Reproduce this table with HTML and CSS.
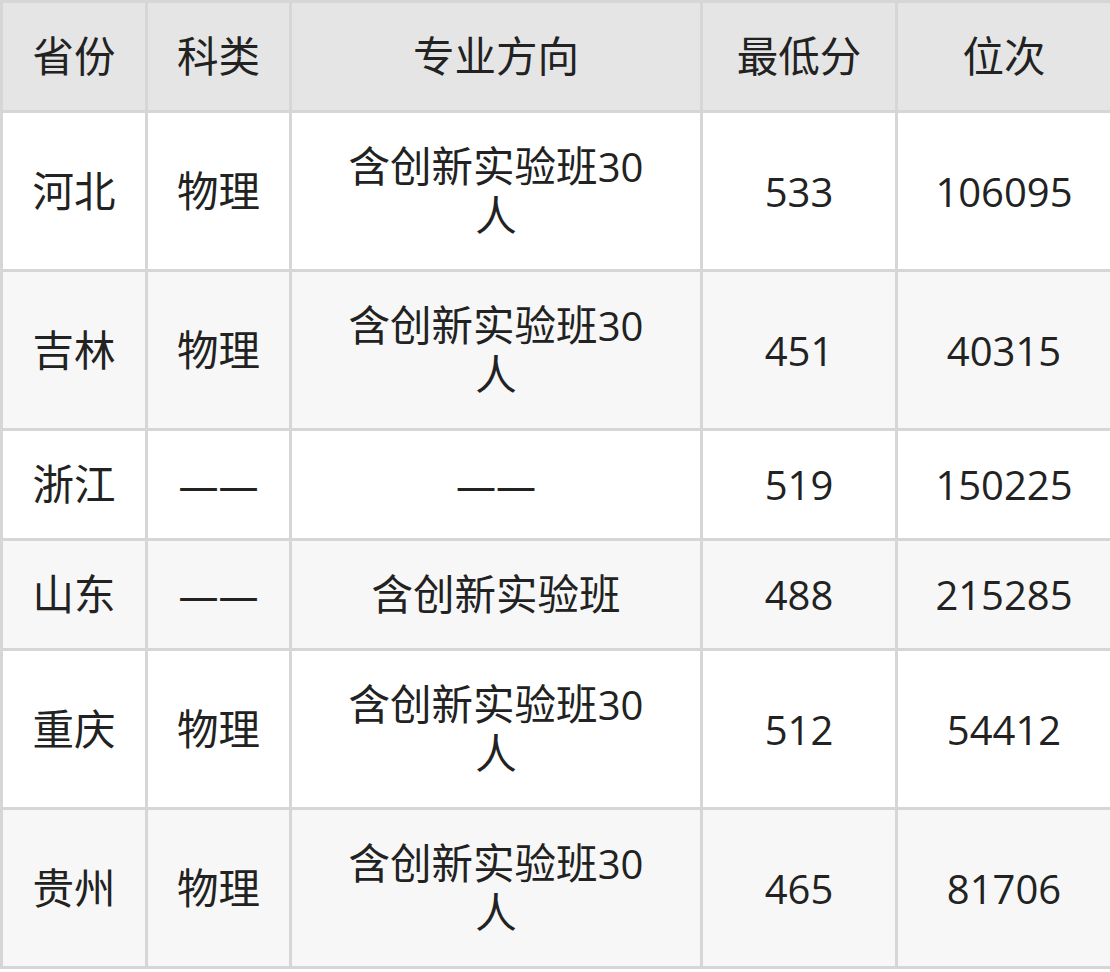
FILE: index.html
```html
<!DOCTYPE html>
<html lang="zh-CN">
<head>
<meta charset="utf-8">
<title>分数线</title>
<link rel="stylesheet" href="styles.css">
</head>
<body>
<table class="score-table">
  <colgroup>
    <col class="c-prov">
    <col class="c-type">
    <col class="c-major">
    <col class="c-min">
    <col class="c-rank">
  </colgroup>
  <thead>
    <tr><th><span class="zh">省份</span></th><th><span class="zh">科类</span></th><th><span class="zh">专业方向</span></th><th><span class="zh">最低分</span></th><th><span class="zh">位次</span></th></tr>
  </thead>
  <tbody>
    <tr><td><span class="zh">河北</span></td><td><span class="zh">物理</span></td><td class="major"><span class="zh">含创新实验班</span>30<span class="zh">人</span></td><td>533</td><td>106095</td></tr>
    <tr><td><span class="zh">吉林</span></td><td><span class="zh">物理</span></td><td class="major"><span class="zh">含创新实验班</span>30<span class="zh">人</span></td><td>451</td><td>40315</td></tr>
    <tr><td><span class="zh">浙江</span></td><td>——</td><td class="major">——</td><td>519</td><td>150225</td></tr>
    <tr><td><span class="zh">山东</span></td><td>——</td><td class="major"><span class="zh">含创新实验班</span></td><td>488</td><td>215285</td></tr>
    <tr><td><span class="zh">重庆</span></td><td><span class="zh">物理</span></td><td class="major"><span class="zh">含创新实验班</span>30<span class="zh">人</span></td><td>512</td><td>54412</td></tr>
    <tr><td><span class="zh">贵州</span></td><td><span class="zh">物理</span></td><td class="major"><span class="zh">含创新实验班</span>30<span class="zh">人</span></td><td>465</td><td>81706</td></tr>
  </tbody>
</table>
</body>
</html>
```

FILE: styles.css
```css
html, body {
  margin: 0;
  padding: 0;
  background: #ffffff;
}

.score-table {
  width: 1110px;
  table-layout: fixed;
  border-collapse: collapse;
  font-family: "Open Sans", "Noto Sans CJK SC", sans-serif;
  font-size: 40px;
  line-height: 49px;
  color: #222222;
}

.zh {
  font-family: "Noto Sans CJK SC", sans-serif;
  font-size: 41.5px;
  line-height: 1;
}

.c-prov { width: 145px; }
.c-type { width: 144px; }
.c-major { width: 411px; }
.c-min { width: 195px; }
.c-rank { width: 215px; }

.score-table th,
.score-table td {
  border: 3px solid #d6d6d6;
  padding: 29px 8px;
  text-align: center;
  vertical-align: middle;
  font-weight: normal;
}

.score-table td.major {
  padding-left: 50px;
  padding-right: 50px;
}

.score-table thead th {
  background: #e5e5e5;
}

.score-table tbody tr:nth-child(odd) td {
  background: #ffffff;
}

.score-table tbody tr:nth-child(even) td {
  background: #f7f7f7;
}
```
